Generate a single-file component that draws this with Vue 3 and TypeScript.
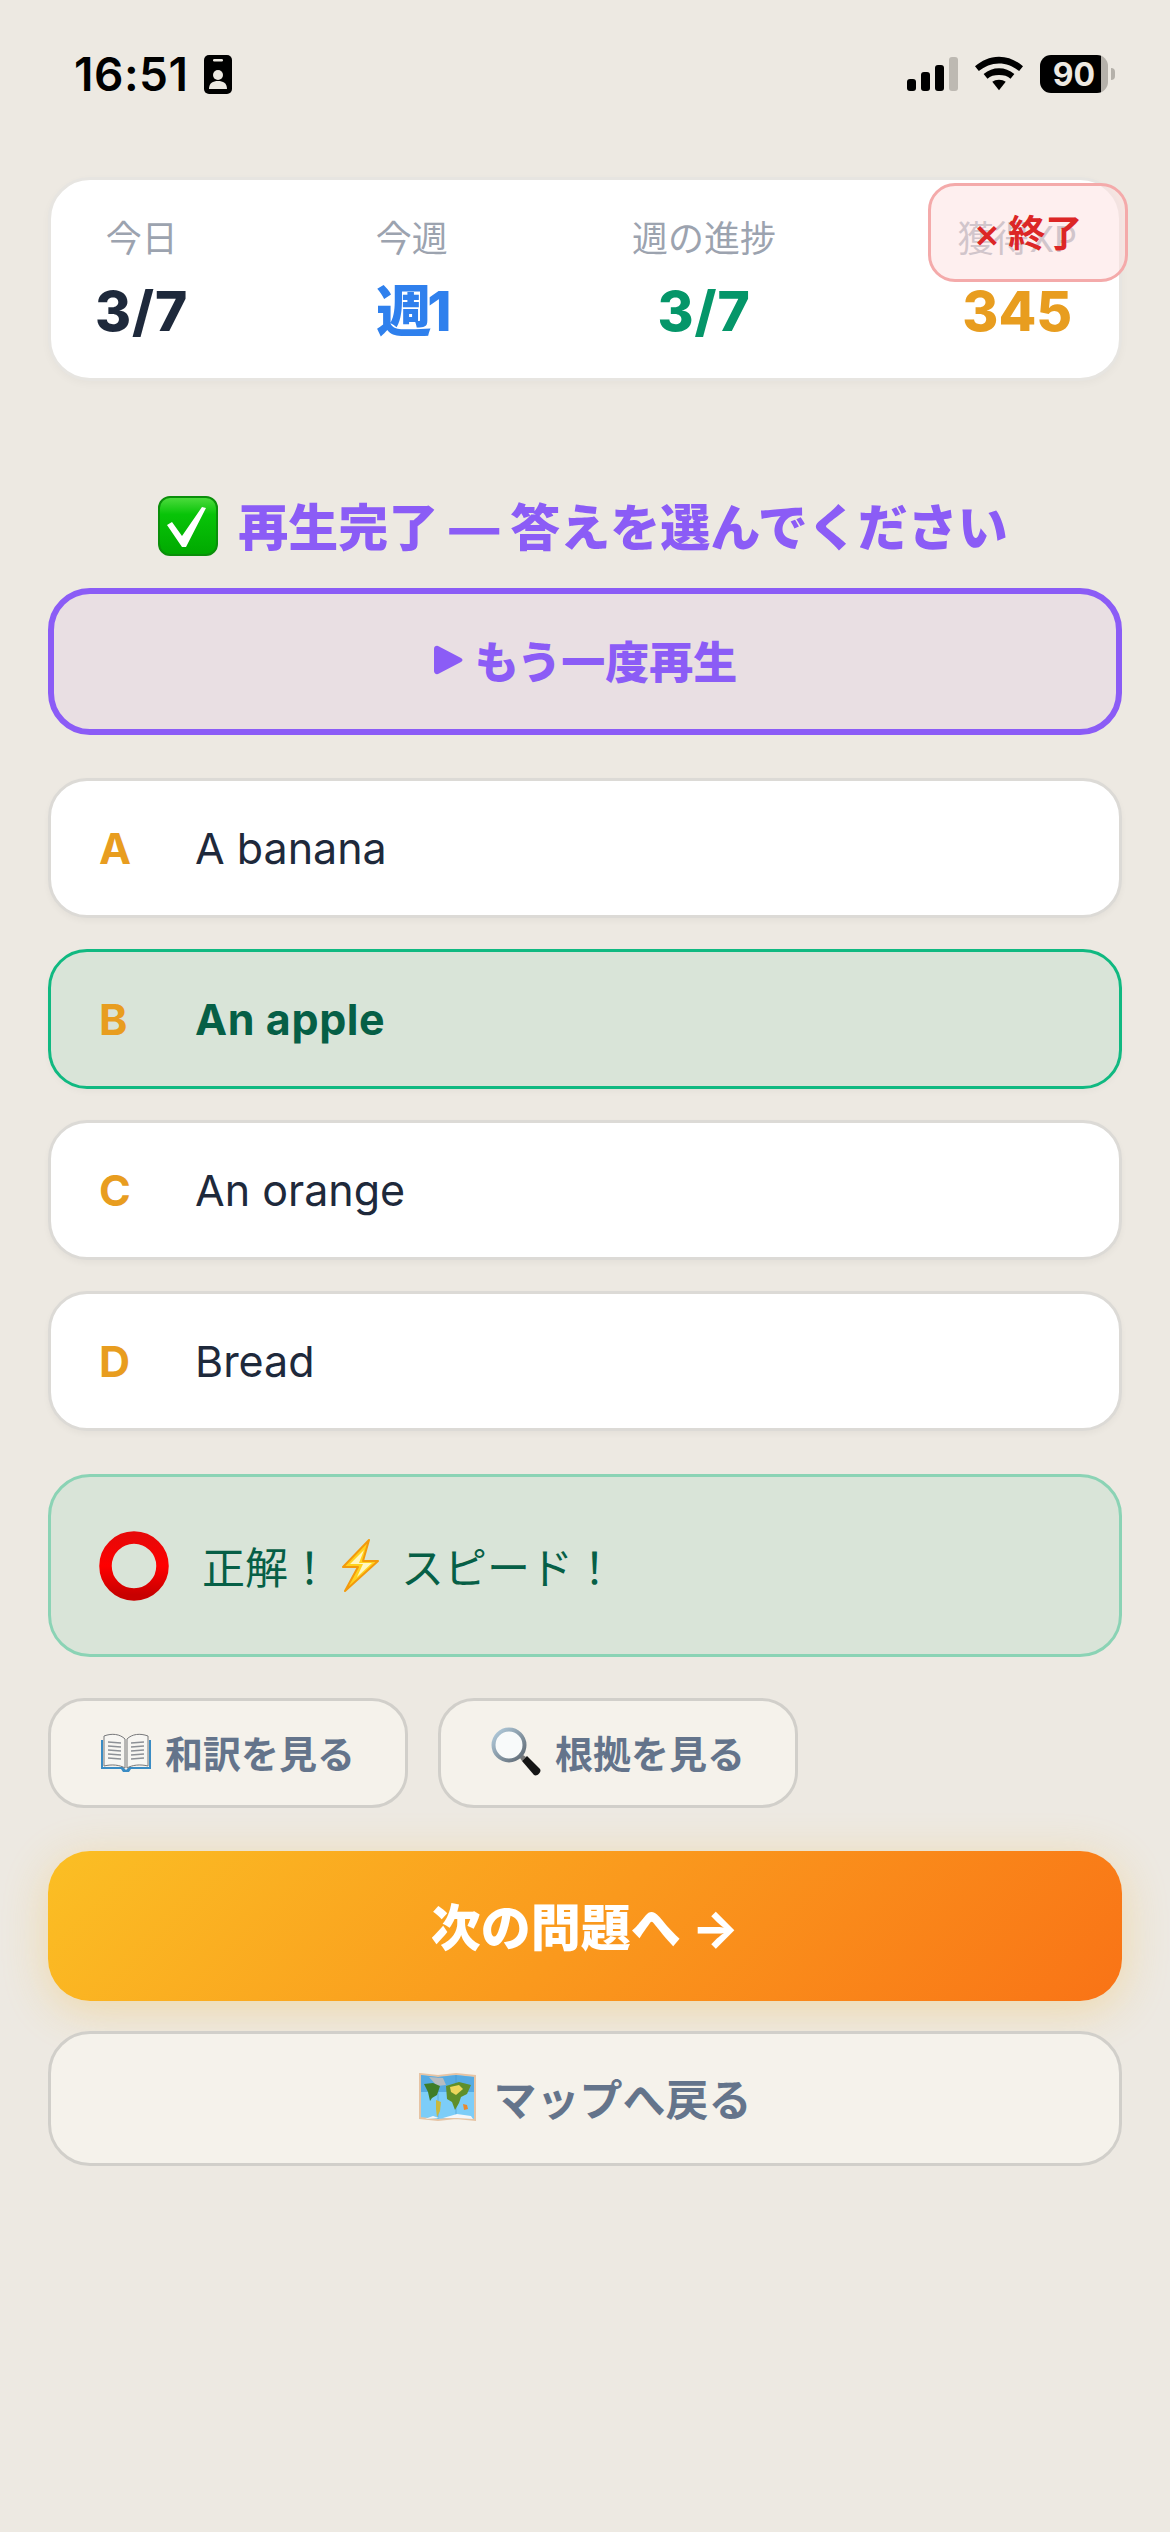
<script setup lang="ts">
const stats = [
  { label: "今日", value: "3/7", tone: "dark" },
  { label: "今週", value: "週1", tone: "blue" },
  { label: "週の進捗", value: "3/7", tone: "green" },
  { label: "獲得XP", value: "345", tone: "amber" },
];

const options = [
  { key: "A", text: "A banana", correct: false },
  { key: "B", text: "An apple", correct: true },
  { key: "C", text: "An orange", correct: false },
  { key: "D", text: "Bread", correct: false },
];
</script>

<template>
  <div class="screen">
    <header class="status">
      <div class="status-left">
        <span class="time">16:51</span>
        <svg class="badge" width="28" height="39" viewBox="0 0 28 39">
          <rect width="28" height="39" rx="5" fill="#000" />
          <rect x="9" y="4" width="10" height="2.5" rx="1.2" fill="#ede9e2" />
          <circle cx="14" cy="20" r="5" fill="#ede9e2" />
          <path d="M5 34c0-6 4-8 9-8s9 2 9 8z" fill="#ede9e2" />
        </svg>
      </div>
      <div class="status-right">
        <svg width="51" height="34" viewBox="0 0 51 34">
          <rect x="0" y="22" width="9" height="12" rx="3" fill="#000" />
          <rect x="14" y="15" width="9" height="19" rx="3" fill="#000" />
          <rect x="28" y="8" width="9" height="26" rx="3" fill="#000" />
          <rect x="42" y="0" width="9" height="34" rx="3" fill="#bdb9b2" />
        </svg>
        <svg width="48" height="36" viewBox="0 0 50 36">
          <path d="M25 0c10 0 18 4 25 10l-4 5C40 10 33 7 25 7S10 10 4 15L0 10C7 4 15 0 25 0z" fill="#000" />
          <path d="M25 12c6 0 11 2 16 6l-4 5c-3-3-7-4-12-4s-9 1-12 4l-4-5c5-4 10-6 16-6z" fill="#000" />
          <path d="M25 24c3 0 5 1 7 2L25 35l-7-9c2-1 4-2 7-2z" fill="#000" />
        </svg>
        <div class="battery">
          <div class="battery-body"><span>90</span></div>
          <div class="battery-tip"></div>
        </div>
      </div>
    </header>

    <main class="content">
      <section class="stats">
        <div v-for="s in stats" :key="s.label" class="stat">
          <span class="stat-label">{{ s.label }}</span>
          <span class="stat-value" :class="s.tone">{{ s.value }}</span>
        </div>
        <button class="quit"><span class="quit-x">✕</span> 終了</button>
      </section>

      <h2 class="heading">
        <svg class="check" width="60" height="60" viewBox="0 0 60 60">
          <defs>
            <linearGradient id="greenBox" x1="0" y1="0" x2="0" y2="1">
              <stop offset="0" stop-color="#4fdc3f" />
              <stop offset="0.3" stop-color="#08c408" />
              <stop offset="1" stop-color="#00a800" />
            </linearGradient>
          </defs>
          <rect x="1" y="1" width="58" height="58" rx="11" fill="url(#greenBox)" stroke="#0a8f0a" stroke-width="2" />
          <path d="M9 29l5-3 10 14L44 11l4 1-20 39h-4z" fill="#fff" />
        </svg>
        <span class="heading-text">再生完了 — 答えを選んでください</span>
      </h2>

      <button class="replay">
        <svg width="30" height="30" viewBox="0 0 30 30">
          <path d="M1 4C1 1 4 0 6 1.5L28 13c2 1 2 3 0 4L6 28.5C4 30 1 29 1 26z" fill="#8b5cf6" />
        </svg>
        <span>もう一度再生</span>
      </button>

      <ul class="options">
        <li v-for="o in options" :key="o.key" class="option" :class="{ correct: o.correct }">
          <span class="option-key">{{ o.key }}</span>
          <span class="option-text">{{ o.text }}</span>
        </li>
      </ul>

      <div class="feedback">
        <svg width="70" height="70" viewBox="0 0 70 70">
          <defs>
            <linearGradient id="ringRed" x1="0" y1="0" x2="0" y2="1">
              <stop offset="0" stop-color="#e80808" />
              <stop offset="0.5" stop-color="#ff0000" />
              <stop offset="1" stop-color="#c80000" />
            </linearGradient>
          </defs>
          <circle cx="35" cy="35" r="28.5" fill="none" stroke="url(#ringRed)" stroke-width="12.5" />
        </svg>
        <span class="feedback-text">正解！</span>
        <svg class="bolt" width="38" height="53" viewBox="0 0 38 53">
          <path d="M28 1L2 28h15L4 52l33-30H22z" fill="#ffd21f" stroke="#f39a0c" stroke-width="2" stroke-linejoin="round" />
          <path d="M23 11L9 25h13l-6 13 15-14H18z" fill="#fff7c2" />
        </svg>
        <span class="feedback-text speed">スピード！</span>
      </div>

      <div class="hints">
        <button class="hint">
          <svg width="50" height="40" viewBox="0 0 50 40">
            <path d="M0 8h2v27h20l3 3 3-3h20V8h2v29H30l-2 3h-6l-2-3H0z" fill="#3a8cc4" />
            <path d="M3 4c8-3 16-2 21 3v29c-5-3-13-4-21-2zM47 4c-8-3-16-2-21 3v29c5-3 13-4 21-2z" fill="#f7f6f2" stroke="#77787a" stroke-width="1" />
            <path d="M7 10l13 1M7 14l13 1M7 18l13 1M7 22l13 1M7 26l13 1M43 10l-13 1M43 14l-13 1M43 18l-13 1M43 22l-13 1M43 26l-13 1" stroke="#8d9196" stroke-width="1.6" />
          </svg>
          <span>和訳を見る</span>
        </button>
        <button class="hint">
          <svg width="50" height="50" viewBox="0 0 50 50">
            <defs>
              <linearGradient id="rim" x1="0" y1="0" x2="1" y2="1">
                <stop offset="0" stop-color="#b5cfe0" />
                <stop offset="1" stop-color="#5c6670" />
              </linearGradient>
            </defs>
            <path d="M29 31l3-3 3 2-4 4z" fill="#777" />
            <path d="M31 34l5-5 13 13c2 3-3 8-6 6z" fill="#151515" />
            <circle cx="18" cy="18" r="15.5" fill="#f8fafa" stroke="url(#rim)" stroke-width="4" />
          </svg>
          <span>根拠を見る</span>
        </button>
      </div>

      <button class="next">次の問題へ →</button>

      <button class="back">
        <svg width="57" height="50" viewBox="0 0 57 50">
          <path d="M1 2l18 2 18-2 19 2v44l-19-2-18 2-18-2z" fill="#7ccdf8" stroke="#e6c4a4" stroke-width="2" />
          <path d="M2 3l17 2 18-2 18 2v15H2z" fill="#56abe2" />
          <path d="M19 5v42M37 3v43" stroke="#3f93cc" stroke-width="1" opacity=".5" />
          <path d="M10 5l14 1 3 7-9 1z" fill="#b7bcc0" />
          <path d="M5 12l9-1 7 3-3 9-5 3-2 3-2-9z" fill="#3f7d28" />
          <path d="M17 28l5 2-1 9-3 6-1-8z" fill="#c9b93e" />
          <path d="M27 14l13-4 12 3-4 9-6 3-2 6-4 7-3-8-5-3z" fill="#5f8f2a" />
          <path d="M31 15l9-2 4 4-7 6-5-3z" fill="#ecd65c" />
          <path d="M44 32l4 1 1 4-4 1z" fill="#e98a2e" />
          <path d="M6 47l8-3 6 2zM24 46l14-4 14 2 2 3-16-1z" fill="#f4f6f8" />
        </svg>
        <span>マップへ戻る</span>
      </button>
    </main>
  </div>
</template>

<style>
html,
body {
  margin: 0;
  background: #ede9e2;
}
</style>

<style scoped>
.screen {
  width: 1170px;
  height: 2532px;
  background: #ede9e2;
  font-family: Inter, "Noto Sans CJK JP", sans-serif;
  color: #1e293b;
  overflow: hidden;
}

.status {
  height: 150px;
  display: flex;
  justify-content: space-between;
  align-items: center;
  padding: 0 55px 2px 74px;
  box-sizing: border-box;
}

.status-left,
.status-right {
  display: flex;
  align-items: center;
}

.status-left {
  gap: 16px;
}

.status-right {
  gap: 17px;
}

.time {
  font-size: 46px;
  font-weight: 600;
  color: #000;
  letter-spacing: 0.5px;
}

.battery {
  display: flex;
  align-items: center;
  gap: 3px;
}

.battery-body {
  width: 68px;
  height: 38px;
  border-radius: 11px;
  background: linear-gradient(90deg, #000 90%, #b5b1aa 90%);
  display: flex;
  align-items: center;
  justify-content: center;
  font-size: 32px;
  font-weight: 700;
  color: #ede9e2;
}

.battery-tip {
  width: 4px;
  height: 12px;
  border-radius: 0 6px 6px 0;
  background: #b5b1aa;
}

.content {
  padding: 27px 48px 0;
  display: flex;
  flex-direction: column;
}

button {
  font-family: inherit;
  cursor: pointer;
}

.stats {
  position: relative;
  height: 204px;
  box-sizing: border-box;
  padding: 35px 42px 0 44px;
  display: flex;
  justify-content: space-between;
  background: #fff;
  border: 3px solid #e7e5e1;
  border-radius: 42px;
  box-shadow: 0 3px 9px rgba(0, 0, 0, 0.03);
}

.stat {
  display: flex;
  flex-direction: column;
  align-items: center;
}

.stat:nth-child(2),
.stat:nth-child(3) {
  transform: translateX(3px);
}

.stat-label {
  font-size: 36px;
  line-height: 48px;
  color: #9ca3af;
}

.stat-value {
  font-size: 55px;
  line-height: 72px;
  font-weight: 800;
  margin-top: 12px;
}

.dark {
  color: #1e293b;
  letter-spacing: 1px;
}

.blue {
  color: #2f80ed;
  letter-spacing: -4px;
}

.green {
  color: #059669;
  letter-spacing: 1px;
}

.amber {
  color: #e89d1f;
}

.quit {
  position: absolute;
  top: 3px;
  right: -9px;
  width: 200px;
  height: 99px;
  padding: 0 0 4px;
  border: 3px solid #f4aaaa;
  border-radius: 27px;
  background: rgba(254, 226, 226, 0.55);
  color: #dc2626;
  font-size: 37px;
  font-weight: 700;
}

.quit-x {
  font-size: 31px;
  font-weight: 700;
}

.heading {
  margin: 115px 0 0;
  height: 60px;
  display: flex;
  align-items: center;
  justify-content: center;
  gap: 20px;
  font-size: 50px;
  font-weight: 800;
  color: #8b5cf6;
  padding-right: 4px;
}

.heading-text {
  margin-bottom: 4px;
}

.replay {
  margin-top: 32px;
  height: 147px;
  padding: 0 0 4px;
  display: flex;
  align-items: center;
  justify-content: center;
  gap: 12px;
  background: #e9dfe3;
  border: 6px solid #8b5cf6;
  border-radius: 42px;
  color: #8b5cf6;
  font-size: 44px;
  font-weight: 800;
}

.options {
  list-style: none;
  margin: 43px 0 0;
  padding: 0;
  display: flex;
  flex-direction: column;
  gap: 31px;
}

.option {
  height: 140px;
  box-sizing: border-box;
  display: flex;
  align-items: center;
  background: #fff;
  border: 3px solid #dcdad6;
  border-radius: 39px;
  box-shadow: 0 3px 6px rgba(0, 0, 0, 0.04);
  font-size: 43px;
  padding-left: 48px;
}

.option.correct {
  background: #d9e4d8;
  border-color: #10b981;
  color: #065f46;
  font-weight: 700;
  letter-spacing: 0.6px;
  box-shadow: 0 3px 6px rgba(0, 0, 0, 0.03);
}

.option-key {
  width: 96px;
  color: #e89d1f;
  font-weight: 700;
}

.feedback {
  margin-top: 43px;
  height: 183px;
  box-sizing: border-box;
  display: flex;
  align-items: center;
  padding-left: 48px;
  background: #d9e4d8;
  border: 3px solid #8bd3b5;
  border-radius: 42px;
  color: #065f46;
  font-size: 43px;
}

.feedback-text {
  margin-left: 33px;
  margin-bottom: 2px;
}

.bolt {
  margin-left: 10px;
}

.feedback .speed {
  margin-left: 22px;
}

.hints {
  margin-top: 41px;
  display: flex;
  gap: 30px;
}

.hint {
  width: 360px;
  height: 110px;
  padding: 0 0 3px;
  display: flex;
  align-items: center;
  justify-content: center;
  gap: 14px;
  background: #f5f2eb;
  border: 3px solid #d1cfca;
  border-radius: 36px;
  color: #64748b;
  font-size: 38px;
  font-weight: 700;
}

.next {
  margin-top: 43px;
  height: 150px;
  padding: 0 0 5px;
  border: 0;
  border-radius: 42px;
  background: linear-gradient(135deg, #fbbf24, #f97316);
  box-shadow: 0 9px 45px rgba(245, 180, 40, 0.3);
  color: #fff;
  font-size: 50px;
  font-weight: 800;
}

.back {
  margin-top: 30px;
  height: 135px;
  padding: 0 0 4px;
  display: flex;
  align-items: center;
  justify-content: center;
  gap: 18px;
  background: #f5f2eb;
  border: 3px solid #d1cfca;
  border-radius: 42px;
  color: #64748b;
  font-size: 43px;
  font-weight: 700;
}
</style>
